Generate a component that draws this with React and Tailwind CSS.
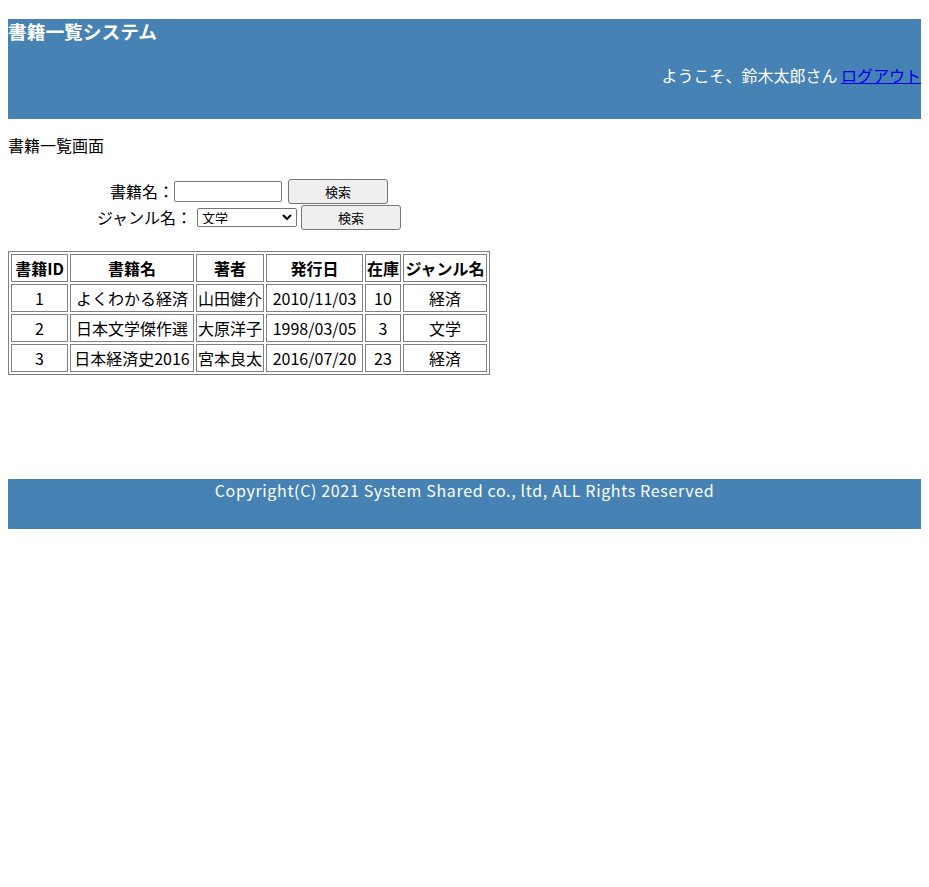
const books = [
  { id: 1, title: 'よくわかる経済', author: '山田健介', date: '2010/11/03', stock: 10, genre: '経済' },
  { id: 2, title: '日本文学傑作選', author: '大原洋子', date: '1998/03/05', stock: 3, genre: '文学' },
  { id: 3, title: '日本経済史2016', author: '宮本良太', date: '2016/07/20', stock: 23, genre: '経済' },
]

const cols = [
  { label: '書籍ID', w: 'w-[57px]' },
  { label: '書籍名', w: 'w-[124px]' },
  { label: '著者', w: 'w-[68px]' },
  { label: '発行日', w: 'w-[97px]' },
  { label: '在庫', w: 'w-[36px]' },
  { label: 'ジャンル名', w: 'w-[84px]' },
]

function SearchButton() {
  return (
    <button className="block w-[100px] h-[25px] bg-[#efefef] border border-[#767676] rounded-[3px] text-[13px] leading-none text-black">
      検索
    </button>
  )
}

export default function App() {
  return (
    <div className="p-2 bg-white text-black text-[16px] font-['Noto_Sans_CJK_JP','Noto_Sans',sans-serif]">
      {/* header */}
      <div className="mt-[11px] h-[100px] bg-[#4682b4] text-white flex flex-col">
        <h1 className="text-[18.72px] font-bold leading-[24px]">書籍一覧システム</h1>
        <p className="mt-[20px] text-right leading-[24px]">
          ようこそ、鈴木太郎さん <a href="#" className="text-[#0000ee] underline">ログアウト</a>
        </p>
      </div>

      <p className="mt-[14px] leading-[24px]">書籍一覧画面</p>

      <div className="w-fit mt-[21px]">
        {/* search form */}
        <div className="flex justify-center items-center h-[26px]">
          <span className="leading-[24px]">書籍名：</span>
          <input type="text" className="block w-[108px] h-[21px] border border-[#767676] rounded-[2px] px-1 text-[13px]" />
          <span className="w-[6px]" />
          <SearchButton />
        </div>
        <div className="flex justify-center items-center h-[26px]">
          <span className="leading-[24px]">ジャンル名：</span>
          <span className="w-[5px]" />
          <div className="relative w-[100px] h-[19px]">
            <select className="block appearance-none w-full h-full border border-[#767676] rounded-[2px] pl-1 text-[13px] leading-none bg-white">
              <option>文学</option>
              <option>経済</option>
            </select>
            <svg width="10" height="7" viewBox="0 0 10 7" className="absolute right-[5px] top-[6px] pointer-events-none">
              <path d="M1 1l4 4 4-4" fill="none" stroke="#000" strokeWidth="2" />
            </svg>
          </div>
          <span className="w-[4px]" />
          <SearchButton />
        </div>

        {/* book table */}
        <table className="mt-[21px] border border-[#808080] border-separate border-spacing-[2px] whitespace-nowrap">
          <thead>
            <tr>
              {cols.map((c) => (
                <th key={c.label} className={`${c.w} h-[28px] border border-[#808080] p-0 leading-[24px] font-bold text-center`}>
                  {c.label}
                </th>
              ))}
            </tr>
          </thead>
          <tbody>
            {books.map((b) => (
              <tr key={b.id}>
                {[b.id, b.title, b.author, b.date, b.stock, b.genre].map((v, i) => (
                  <td key={i} className="h-[28px] border border-[#808080] p-0 leading-[24px] text-center">
                    {v}
                  </td>
                ))}
              </tr>
            ))}
          </tbody>
        </table>
      </div>

      {/* footer */}
      <div className="mt-[104px] h-[50px] bg-[#4682b4] text-white text-center leading-[22px] tracking-[0.65px]">
        Copyright(C) 2021 System Shared co., ltd, ALL Rights Reserved
      </div>
    </div>
  )
}
